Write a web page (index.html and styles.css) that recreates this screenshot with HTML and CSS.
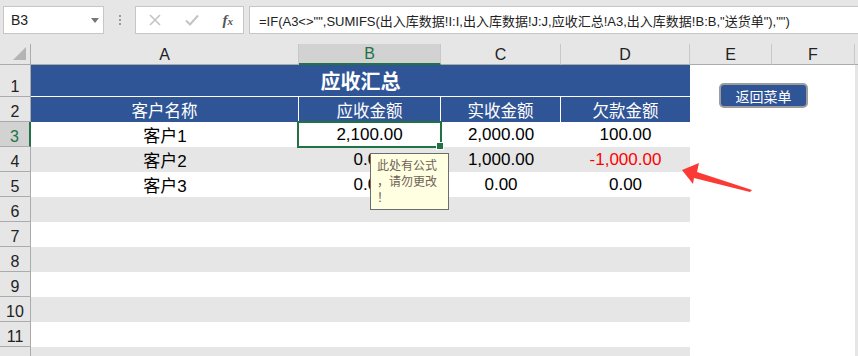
FILE: index.html
```html
<!DOCTYPE html>
<html lang="zh">
<head>
<meta charset="utf-8">
<title>应收汇总</title>
<link rel="stylesheet" href="styles.css">
</head>
<body>
<div class="app">
  <div class="fbar">
    <div class="namebox">
      <span class="nb-text">B3</span>
      <svg class="caret" width="8" height="5" viewBox="0 0 8 5"><path d="M0 0H8L4 5Z" fill="#777"/></svg>
    </div>
    <div class="dots"><i></i><i></i><i></i></div>
    <div class="fbtns">
      <svg width="14" height="14" viewBox="0 0 14 14"><path d="M2 2L12 12M12 2L2 12" stroke="#c4c4c4" stroke-width="1.6"/></svg>
      <svg width="16" height="14" viewBox="0 0 16 14"><path d="M2 7.5L6 11.5L14 2.5" stroke="#c4c4c4" stroke-width="2" fill="none"/></svg>
      <span class="fx">f<small>x</small></span>
    </div>
    <div class="finput">=IF(A3&lt;&gt;"",SUMIFS(出入库数据!I:I,出入库数据!J:J,应收汇总!A3,出入库数据!B:B,"送货单"),"")</div>
  </div>

  <div class="sheet">
    <div class="ch corner"><svg width="16" height="16" viewBox="0 0 16 16"><path d="M14 1V14H1Z" fill="#b4b4b4"/></svg></div>
    <div class="ch">A</div>
    <div class="ch sel-col">B</div>
    <div class="ch">C</div>
    <div class="ch">D</div>
    <div class="ch">E</div>
    <div class="ch">F</div>
    <div class="ch edge"></div>

    <div class="rh">1</div>
    <div class="title">应收汇总</div>
    <div class="blank"></div><div class="blank"></div><div class="edge"></div>

    <div class="rh">2</div>
    <div class="hd sep">客户名称</div>
    <div class="hd sep">应收金额</div>
    <div class="hd sep">实收金额</div>
    <div class="hd">欠款金额</div>
    <div class="blank"></div><div class="blank"></div><div class="edge"></div>

    <div class="rh sel-row">3</div>
    <div class="c">客户1</div>
    <div class="c active">2,100.00</div>
    <div class="c">2,000.00</div>
    <div class="c">100.00</div>
    <div class="blank"></div><div class="blank"></div><div class="edge"></div>

    <div class="rh">4</div>
    <div class="c band">客户2</div>
    <div class="c band">0.00</div>
    <div class="c band">1,000.00</div>
    <div class="c band neg">-1,000.00</div>
    <div class="blank"></div><div class="blank"></div><div class="edge"></div>

    <div class="rh">5</div>
    <div class="c">客户3</div>
    <div class="c">0.00</div>
    <div class="c">0.00</div>
    <div class="c">0.00</div>
    <div class="blank"></div><div class="blank"></div><div class="edge"></div>

    <div class="rh">6</div><div class="c band"></div><div class="c band"></div><div class="c band"></div><div class="c band"></div><div class="blank"></div><div class="blank"></div><div class="edge"></div>
    <div class="rh">7</div><div class="c"></div><div class="c"></div><div class="c"></div><div class="c"></div><div class="blank"></div><div class="blank"></div><div class="edge"></div>
    <div class="rh">8</div><div class="c band"></div><div class="c band"></div><div class="c band"></div><div class="c band"></div><div class="blank"></div><div class="blank"></div><div class="edge"></div>
    <div class="rh">9</div><div class="c"></div><div class="c"></div><div class="c"></div><div class="c"></div><div class="blank"></div><div class="blank"></div><div class="edge"></div>
    <div class="rh">10</div><div class="c band"></div><div class="c band"></div><div class="c band"></div><div class="c band"></div><div class="blank"></div><div class="blank"></div><div class="edge"></div>
    <div class="rh">11</div><div class="c"></div><div class="c"></div><div class="c"></div><div class="c"></div><div class="blank"></div><div class="blank"></div><div class="edge"></div>
    <div class="rh last"></div><div class="c band"></div><div class="c band"></div><div class="c band"></div><div class="c band"></div><div class="blank"></div><div class="blank"></div><div class="edge"></div>
  </div>

  <div class="btn">返回菜单</div>
  <div class="comment">此处有公式<br>，请勿更改<br>！</div>
  <svg class="arrow" width="858" height="356" viewBox="0 0 858 356">
    <polygon points="682,170 699,163 697,172 752,190 750,192 694,178 693,184" fill="#fb3a35"/>
  </svg>
</div>
</body>
</html>
```

FILE: styles.css
```css
* { box-sizing: border-box; }
html, body { margin: 0; padding: 0; }
body {
  width: 858px;
  height: 356px;
  overflow: hidden;
  background: #e6e6e6;
  font-family: "Liberation Sans", "Noto Sans CJK SC", sans-serif;
}
.app { position: relative; width: 858px; height: 356px; overflow: hidden; }

/* formula bar */
.fbar {
  height: 44px;
  padding: 6px 0 10px 3px;
  display: flex;
  align-items: stretch;
}
.namebox {
  width: 101px;
  background: #fff;
  border: 1px solid #c6c6c6;
  display: flex;
  align-items: center;
  justify-content: space-between;
  padding: 0 4px 0 7px;
  font-size: 14px;
  color: #222;
}
.dots {
  width: 31px;
  display: flex;
  flex-direction: column;
  align-items: center;
  justify-content: center;
  gap: 2px;
}
.dots i { width: 2px; height: 2px; background: #9a9a9a; display: block; }
.fbtns {
  width: 109px;
  background: #fff;
  border: 1px solid #c6c6c6;
  display: flex;
  align-items: center;
  justify-content: space-between;
  padding: 0 10px 0 12px;
}
.fx {
  font-family: "Liberation Serif", serif;
  font-style: italic;
  font-weight: bold;
  font-size: 15px;
  color: #555;
}
.fx small { font-size: 11px; }
.finput {
  flex: 1;
  margin-left: 5px;
  background: #fff;
  border: 1px solid #c6c6c6;
  border-right: none;
  padding-left: 9px;
  display: flex;
  align-items: center;
  font-size: 13px;
  color: #222;
  white-space: nowrap;
  overflow: hidden;
}

/* sheet grid */
.sheet {
  display: grid;
  grid-template-columns: 31px 268px 142px 120px 129px 82px 83px 1fr;
  grid-template-rows: 21px 32px repeat(11, 25px);
  background: #fff;
}
.ch {
  background: #e6e6e6;
  border-bottom: 1px solid #ababab;
  border-right: 1px solid #c8c8c8;
  display: flex;
  align-items: flex-end;
  justify-content: center;
  font-size: 16px;
  line-height: 19px;
  color: #222;
}
.ch.corner {
  border-right: 1px solid #ababab;
  justify-content: flex-end;
  padding: 0 2px 2px 0;
}
.ch.sel-col {
  background: #d2d2d2;
  border-bottom: 2px solid #217346;
  color: #217346;
  line-height: 18px;
}
.ch.edge { border-right: none; }

.rh {
  background: #e6e6e6;
  border-right: 1px solid #ababab;
  border-bottom: 1px solid #ababab;
  display: flex;
  align-items: flex-end;
  justify-content: center;
  font-size: 16px;
  line-height: 19px;
  color: #222;
}
.rh.sel-row {
  background: #d2d2d2;
  color: #217346;
  border-right: 2px solid #217346;
}
.edge { background: #e6e6e6; }
.blank { background: #fff; }

.title {
  grid-column: span 4;
  background: #2f5597;
  border-bottom: 1px solid #fff;
  color: #fff;
  font-weight: bold;
  font-size: 20px;
  display: flex;
  align-items: center;
  justify-content: center;
  font-family: "Noto Sans CJK SC", sans-serif;
}
.hd {
  background: #2f5597;
  color: #fff;
  font-size: 16.5px;
  display: flex;
  align-items: center;
  justify-content: center;
}
.hd.sep { border-right: 1px solid #fff; }

.c {
  background: #fff;
  display: flex;
  align-items: center;
  justify-content: center;
  font-size: 17px;
  color: #000;
}
.c.band { background: #e6e6e6; }
.c.neg { color: #ff0000; }
.c.active {
  position: relative;
  outline: 2px solid #217346;
  outline-offset: -1px;
  margin-left: -1px;
}
.c.active::after {
  content: "";
  position: absolute;
  right: -3px;
  bottom: -3px;
  width: 6px;
  height: 6px;
  background: #217346;
  border: 1px solid #fff;
}

/* floating objects */
.btn {
  position: absolute;
  left: 719px;
  top: 83px;
  width: 89px;
  height: 25px;
  background: #2f5597;
  border: 2px solid #9c9c9c;
  border-radius: 5px;
  color: #fff;
  font-size: 14px;
  display: flex;
  align-items: center;
  justify-content: center;
  font-family: "Noto Sans CJK SC", sans-serif;
}
.comment {
  position: absolute;
  left: 370px;
  top: 153px;
  width: 79px;
  height: 57px;
  background: #ffffe1;
  border: 1px solid #6d6d6d;
  padding: 3px 0 0 6px;
  font-size: 12px;
  line-height: 16px;
  color: #6f6255;
  font-family: "Noto Sans CJK SC", sans-serif;
}
.arrow { position: absolute; left: 0; top: 0; pointer-events: none; }
```
